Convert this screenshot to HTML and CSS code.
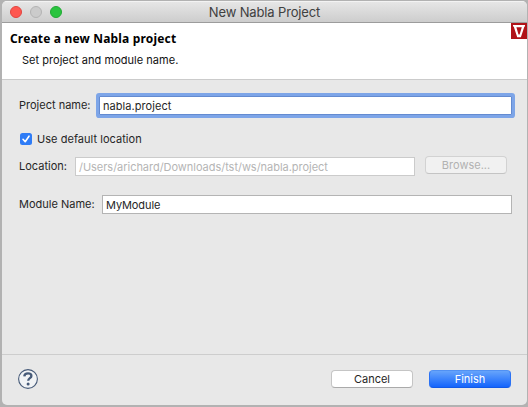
FILE: index.html
```html
<!DOCTYPE html>
<html lang="en">
<head>
<meta charset="utf-8">
<title>New Nabla Project</title>
<link rel="stylesheet" href="styles.css">
</head>
<body>
<main class="window">
  <header class="titlebar">
    <div class="lights"><i class="light close"></i><i class="light minimize"></i><i class="light expand"></i></div>
    <span class="window-title">New Nabla Project</span>
  </header>
  <section class="banner">
    <div class="banner-text">
      <h1>Create a new Nabla project</h1>
      <p>Set project and module name.</p>
    </div>
    <svg class="logo" width="16" height="16" viewBox="0 0 16 16">
      <path fill="#b11218" d="M0 0h16v16H0z"/>
      <path fill="#fff" fill-rule="evenodd" d="M2 2h12v1.600h-.6L9.900 14.300H6.200L2.700 3.600H2zM5.400 4.200l2.100 7.300h1.100l2.200-7.300z"/>
    </svg>
  </section>
  <section class="form">
    <div class="row project">
      <label>Project name:</label>
      <div class="field focused"><span class="t-project">nabla.project</span></div>
    </div>
    <div class="row default">
      <svg class="check" width="12" height="12" viewBox="0 0 12 12">
        <rect width="12" height="12" rx="2.5" fill="#2f7cf6"/>
        <path d="M3 6.300l2.200 2.400L9 3.200" fill="none" stroke="#fff" stroke-width="1.600" stroke-linecap="round" stroke-linejoin="round"/>
      </svg>
      <label class="l-default">Use default location</label>
    </div>
    <div class="row location">
      <label class="l-location">Location:</label>
      <div class="field disabled"><span class="t-location">/Users/arichard/Downloads/tst/ws/nabla.project</span></div>
      <div class="button inactive"><span>Browse...</span></div>
    </div>
    <div class="row module">
      <label>Module Name:</label>
      <div class="field"><span class="t-module">MyModule</span></div>
    </div>
  </section>
  <footer class="footer">
    <svg class="help" width="22" height="22" viewBox="0 0 22 22">
      <circle cx="11" cy="11" r="9.400" fill="#f1f3f5" stroke="#465a78" stroke-width="1.100"/>
      <path d="M7.300 8.300C7.500 6 8.900 5.300 11 5.300c2.200 0 3.400 1 3.400 2.600 0 2.300-3.200 2.200-3.200 4.800" fill="none" stroke="#465a78" stroke-width="2.300"/>
      <circle cx="11.100" cy="15.900" r="1.500" fill="#465a78"/>
    </svg>
    <div class="button"><span>Cancel</span></div>
    <div class="button primary"><span>Finish</span></div>
  </footer>
</main>
</body>
</html>
```
FILE: styles.css
```css
* { box-sizing: border-box; }
body {
  margin: 0;
  width: 528px;
  height: 407px;
  overflow: hidden;
  padding: 1px 1px 2px 2px;
  background: #b2b2b2;
  font: 11px/14px Inter, "Liberation Sans", sans-serif;
  color: #262626;
}
label, span, h1, p { white-space: nowrap; }
.window {
  width: 525px;
  height: 404px;
  display: flex;
  flex-direction: column;
  background: #e8e8e8;
  border-radius: 5px;
  overflow: hidden;
}
.titlebar {
  height: 22px;
  flex: none;
  display: grid;
  grid-template-columns: 80px 1fr 80px;
  align-items: center;
  background: linear-gradient(#e6e6e6, #cdcdcd);
  border-top: 1px solid #f3f3f3;
  border-bottom: 1px solid #9c9c9c;
}
.lights { display: flex; gap: 8px; padding-left: 8px; }
.light { width: 12px; height: 12px; border-radius: 50%; border: 1px solid; }
.close { background: #fe5750; border-color: #e1443f; }
.minimize { background: #cbcbcb; border-color: #b3b3b3; }
.expand { background: #2ac43f; border-color: #1fa933; }
.window-title {
  justify-self: center;
  font-size: 13px;
  line-height: 16px;
  letter-spacing: -0.14px;
  color: #404040;
}
.banner {
  height: 57px;
  flex: none;
  display: flex;
  justify-content: space-between;
  background: #fff;
  border-bottom: 1px solid #cbcbcb;
}
.banner-text { padding: 7px 0 0 8px; }
h1 {
  margin: 0;
  font: bold 12px/17px "Noto Sans", sans-serif;
  letter-spacing: 0.17px;
  color: #000;
}
p { margin: 5px 0 0 12px; line-height: 16px; letter-spacing: 0.03px; color: #111; }
.form { height: 274px; flex: none; padding: 16px 15px 0 17px; }
.row { display: flex; align-items: center; height: 19px; }
.row label { padding-bottom: 2px; }
.project { justify-content: space-between; }
.default { margin-top: 15px; height: 18px; padding-left: 1px; gap: 5px; }
.row .l-default { padding-bottom: 0; letter-spacing: 0.04px; }
.location { margin-top: 9px; }
.module { margin-top: 19px; justify-content: space-between; }
.field {
  height: 19px;
  width: 410px;
  padding: 2px 0 0 3px;
  border: 1px solid #b4b4b4;
  background: #fff;
  line-height: 15px;
}
.focused {
  width: 413px;
  border-color: #648bd0;
  box-shadow: 0 0 0 3px #7da5e8;
  border-radius: 1px;
}
.disabled { width: 340px; border-color: #cbcbcb; color: #b5b5b5; }
.t-project { letter-spacing: 0.06px; }
.t-location { letter-spacing: -0.03px; }
.t-module { letter-spacing: -0.1px; }
.l-location { width: 56px; }
.button {
  width: 82px;
  height: 18px;
  border-radius: 4px;
  background: #fff;
  border: 1px solid #c5c5c5;
  border-bottom-color: #aaa;
  display: flex;
  align-items: center;
  justify-content: center;
}
.inactive {
  align-self: flex-start;
  margin: -1px 0 0 10px;
  background: #f1f1f1;
  border-color: #d2d2d2;
  border-bottom-color: #c4c4c4;
  color: #b1b1b1;
}
.primary {
  background: linear-gradient(#66a4fb, #1464fc);
  border-color: #5191f3 #2b72f4 #1259e6;
  color: #fff;
}
.footer {
  flex: 1;
  display: flex;
  align-items: center;
  gap: 16px;
  padding: 0 16px 2px 15px;
  border-top: 1px solid #cdcdcd;
}
.help { margin-right: auto; }
```
